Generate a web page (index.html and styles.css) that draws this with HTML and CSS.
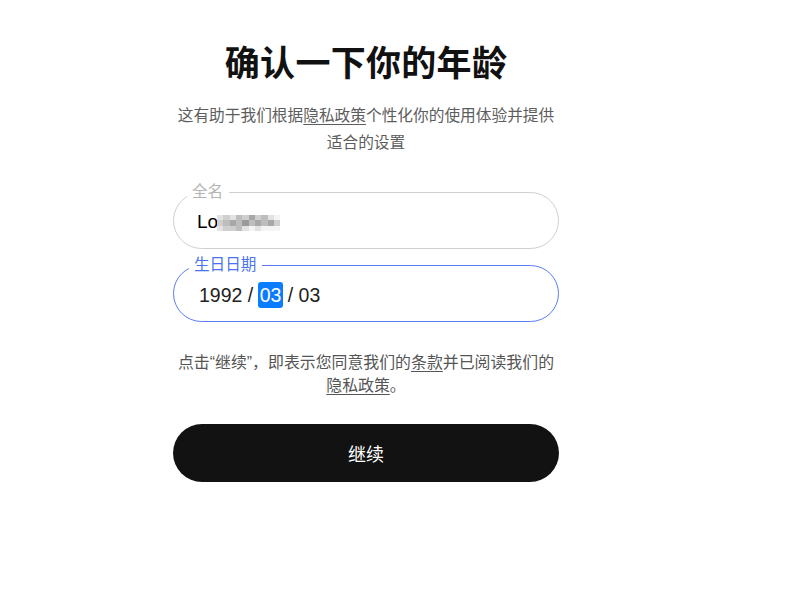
FILE: index.html
```html
<!DOCTYPE html>
<html lang="zh-CN">
<head>
<meta charset="utf-8">
<title>确认一下你的年龄</title>
<link rel="stylesheet" href="styles.css">
</head>
<body>
<main class="page">
  <section class="card">
    <h1 class="title">确认一下你的年龄</h1>
    <p class="subtitle">这有助于我们根据<a href="#" class="link">隐私政策</a>个性化你的使用体验并提供适合的设置</p>

    <fieldset class="field">
      <legend class="legend">全名</legend>
      <div class="value">Lo<span class="mosaic"><i class="c1"></i><i class="c2"></i><i class="c1"></i><i class="c3"></i><i class="c2"></i><i class="c4"></i><i class="c2"></i><i class="c3"></i><i class="c1"></i><i class="c0"></i><i class="c2"></i><i class="c3"></i><i class="c4"></i><i class="c3"></i><i class="c5"></i><i class="c3"></i><i class="c4"></i><i class="c3"></i><i class="c4"></i><i class="c2"></i><i class="c1"></i><i class="c2"></i><i class="c2"></i><i class="c3"></i><i class="c1"></i><i class="c0"></i><i class="c1"></i><i class="c0"></i><i class="c0"></i><i class="c0"></i></span></div>
    </fieldset>

    <fieldset class="field field-active">
      <legend class="legend">生日日期</legend>
      <div class="value date">1992 / <span class="seg-selected">03</span> / 03</div>
    </fieldset>

    <p class="terms">点击“继续”，即表示您同意我们的<a href="#" class="link">条款</a>并已阅读我们的<a href="#" class="link nowrap">隐私政策</a>。</p>

    <button class="btn" type="button">继续</button>
  </section>
</main>
</body>
</html>
```

FILE: styles.css
```css
* { box-sizing: border-box; }
html, body { margin: 0; padding: 0; background: #fff; }
body {
  font-family: "Liberation Sans", "Noto Sans CJK SC", sans-serif;
  color: #111;
}
.page {
  padding-top: 37px;
  padding-left: 173px;
}
.card {
  width: 386px;
  display: flex;
  flex-direction: column;
  align-items: stretch;
}
.title {
  margin: 0;
  text-align: center;
  font-size: 35px;
  line-height: 54px;
  font-weight: 600;
  color: #111;
  letter-spacing: 0.3px;
}
.subtitle {
  margin: 11px 0 0;
  text-align: center;
  font-size: 15.7px;
  line-height: 27px;
  color: #5d5d5d;
}
.link { color: #5d5d5d; text-decoration: underline; text-underline-offset: 3px; }
.nowrap { white-space: nowrap; }
.field {
  margin: 27px 0 0;
  padding: 0 24px;
  height: 66px;
  border: 1px solid #d0d0d0;
  border-radius: 30px;
  min-width: 0;
}
.field-active {
  margin-top: 7px;
  border-color: #5b7ff3;
}
.legend {
  margin-left: -11px;
  padding: 0 6px 0 5px;
  font-size: 15.6px;
  line-height: 18px;
  color: #b4b4b4;
}
.field-active .legend { color: #4a74ee; margin-left: -9px; }
.value {
  margin-top: 8px;
  margin-left: -1px;
  font-size: 19px;
  line-height: 26px;
  color: #000;
  display: flex;
  align-items: center;
}
.mosaic {
  display: inline-grid;
  grid-template-columns: repeat(10, 6.3px);
  grid-auto-rows: 5.5px;
  margin-left: -1px;
  margin-top: 2px;
}
.mosaic i { display: block; }
.c0 { background: #f4f4f4; }
.c1 { background: #e2e2e2; }
.c2 { background: #cfcfcf; }
.c3 { background: #bdbdbd; }
.c4 { background: #a8a8a8; }
.c5 { background: #999; }
.date {
  padding-left: 2px;
  font-size: 19.5px;
  color: #222;
  white-space: pre;
}
.seg-selected {
  background: #0a7cff;
  color: #fff;
  border-radius: 3px;
  padding: 0 2px;
  margin: 0 -1px;
  line-height: 26px;
}
.terms {
  margin: 29px 0 0;
  text-align: center;
  font-size: 15.9px;
  line-height: 23px;
  color: #555;
}
.terms .link { color: #555; }
.btn {
  margin-top: 27px;
  height: 58px;
  border: none;
  border-radius: 29px;
  background: #121212;
  color: #fff;
  font-family: "Liberation Sans", "Noto Sans CJK SC", sans-serif;
  font-size: 18px;
  cursor: pointer;
}
```
